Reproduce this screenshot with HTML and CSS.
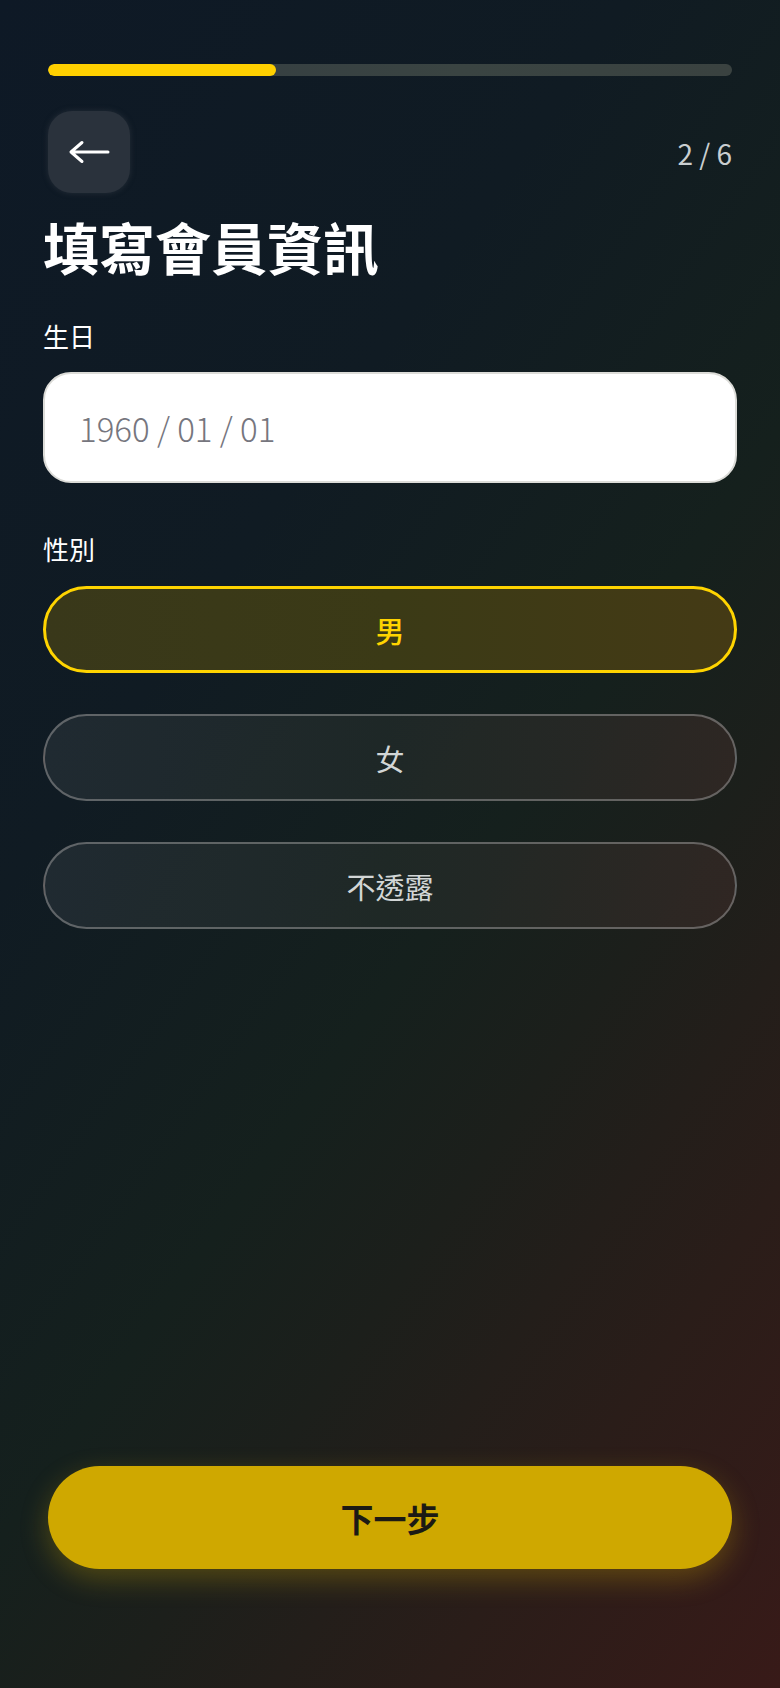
FILE: index.html
```html
<!DOCTYPE html>
<html lang="zh-Hant">
<head>
<meta charset="utf-8">
<meta name="viewport" content="width=device-width, initial-scale=1">
<title>填寫會員資訊</title>
<link rel="stylesheet" href="styles.css">
</head>
<body>
<main class="page">
  <div class="progress"><div class="progress-fill"></div></div>
  <header class="topbar">
    <button class="back" type="button" aria-label="返回">
      <svg viewBox="0 0 42 24" width="42" height="24" aria-hidden="true">
        <path d="M40 12H3M14 2.5L3 12l11 9.5" fill="none" stroke="#ffffff" stroke-width="3" stroke-linecap="round" stroke-linejoin="round"/>
      </svg>
    </button>
    <span class="step">2 / 6</span>
  </header>
  <h1 class="title">填寫會員資訊</h1>

  <label class="label label-first">生日</label>
  <div class="input">1960 / 01 / 01</div>

  <label class="label label-second">性別</label>
  <div class="options">
    <button class="option selected" type="button">男</button>
    <button class="option" type="button">女</button>
    <button class="option" type="button">不透露</button>
  </div>

  <button class="next" type="button">下一步</button>
</main>
</body>
</html>
```

FILE: styles.css
```css
* { box-sizing: border-box; }

html, body {
  margin: 0;
  padding: 0;
}

body {
  min-height: 1688px;
  font-family: "Noto Sans CJK TC", "Noto Sans", sans-serif;
  color: #ffffff;
  background: linear-gradient(125deg, #0e1926 0%, #101b23 32%, #15201d 55%, #1c1f1b 66%, #2a1d19 82%, #381a18 100%);
}

.page {
  min-height: 1688px;
  display: flex;
  flex-direction: column;
  padding: 64px 43px 119px;
}

.progress {
  margin: 0 5px;
  height: 12px;
  border-radius: 6px;
  background: linear-gradient(90deg, #333c42 0%, #3a4442 60%, #3a4240 100%);
  overflow: hidden;
}

.progress-fill {
  width: 33.4%;
  height: 100%;
  border-radius: 6px;
  background: #ffd000;
}

.topbar {
  margin: 35px 5px 0;
  display: flex;
  align-items: center;
  justify-content: space-between;
}

.back {
  width: 82px;
  height: 82px;
  border: none;
  border-radius: 24px;
  background: #2a323c;
  box-shadow: 0 0 5px 1px rgba(42, 50, 60, 0.6);
  display: flex;
  align-items: center;
  justify-content: center;
  padding: 0;
}

.step {
  font-size: 28px;
  color: #c9ced0;
  letter-spacing: 0;
  padding-top: 2px;
}

.title {
  margin: 19px 0 0;
  font-size: 56px;
  line-height: 67px;
  font-weight: 700;
  letter-spacing: 0;
}

.label {
  display: block;
  font-size: 26px;
  line-height: 36px;
  color: #ffffff;
}

.label-first { margin-top: 39px; }
.label-second { margin-top: 48px; }

.input {
  margin-top: 18px;
  height: 111px;
  border-radius: 28px;
  background: #ffffff;
  border: 2px solid #dcdcd8;
  display: flex;
  align-items: center;
  padding: 0 34px;
  font-size: 33px;
  font-weight: 300;
  color: #76767e;
}

.options {
  margin-top: 19px;
  display: flex;
  flex-direction: column;
  gap: 41px;
}

.option {
  height: 87px;
  border-radius: 44px;
  border: 2px solid rgba(150, 150, 150, 0.55);
  background: linear-gradient(90deg, rgba(45, 55, 62, 0.55) 0%, rgba(40, 48, 45, 0.55) 50%, rgba(62, 45, 42, 0.55) 100%);
  font-family: "Noto Sans CJK TC", "Noto Sans", sans-serif;
  font-size: 29px;
  color: #d2d6d6;
  padding: 0;
}

.option.selected {
  border: 3px solid #ffd400;
  background: linear-gradient(90deg, #39381a 0%, #3b3a16 50%, #443a15 100%);
  color: #ffd400;
  font-weight: 500;
}

.next {
  margin: auto 5px 0;
  height: 103px;
  border: none;
  border-radius: 52px;
  background: #cfa800;
  box-shadow: 0 10px 28px rgba(207, 168, 0, 0.3);
  font-family: "Noto Sans CJK TC", "Noto Sans", sans-serif;
  font-size: 33px;
  font-weight: 700;
  color: #1c1a14;
  padding: 0;
}
```
